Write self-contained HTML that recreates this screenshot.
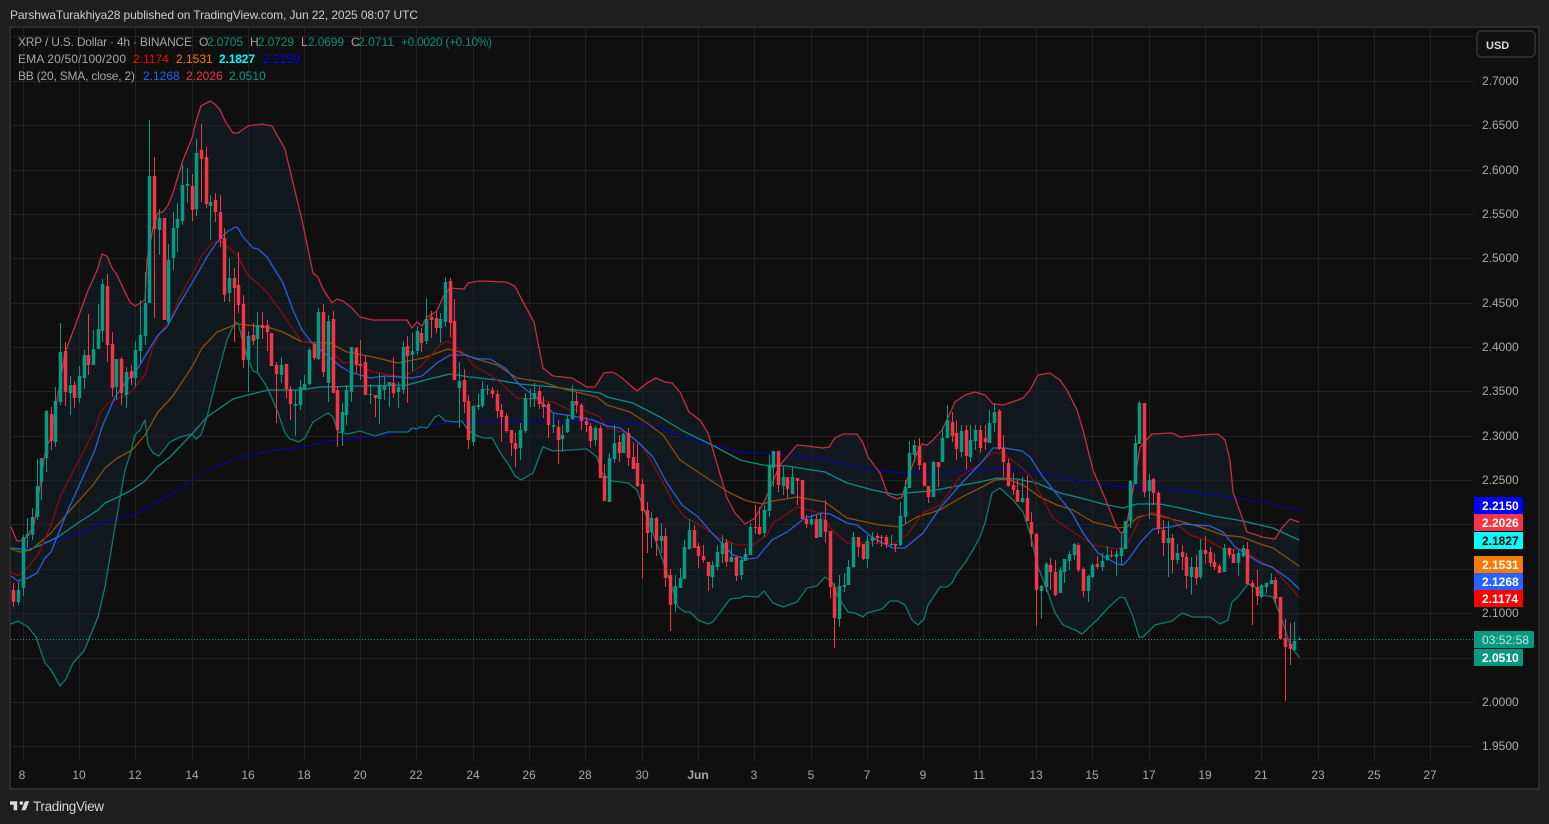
<!DOCTYPE html>
<html lang="en"><head><meta charset="utf-8"><title>XRP / U.S. Dollar chart</title>
<style>
html,body{margin:0;padding:0;background:#1e1e1e;width:1549px;height:824px;overflow:hidden}
svg{display:block}
text{font-family:"Liberation Sans",sans-serif;font-size:12px}
.g{fill:#a6a6a6}.t{fill:#0b8f78}.a{fill:#ababab;text-anchor:start}.x{fill:#a8a8a8;text-anchor:middle}
.l{fill:#fff;font-weight:bold;text-anchor:start}
polyline{fill:none;stroke-linejoin:round;stroke-linecap:round}
</style></head><body>
<svg xmlns="http://www.w3.org/2000/svg" width="1549" height="824" viewBox="0 0 1549 824">
<rect width="1549" height="824" fill="#1e1e1e"/>
<text x="10" y="19" fill="#cdcdcd" textLength="408" lengthAdjust="spacing">ParshwaTurakhiya28 published on TradingView.com, Jun 22, 2025 08:07 UTC</text>
<rect x="10" y="27" width="1529" height="762" fill="#0f0f0f" stroke="#2b2b2b" stroke-width="2"/>
<!-- band -->
<path fill="#12191e" d="M11 527L17 541 23 540 28 535 34 525 46 447 50 440 57 400 65 353 78 318 87 293 98 268 102 254 107 256 112 268 117 275 125 292 130 302 135 306 145 300 147 260 153 228 158 213 163 212 168 205 173 193 183 160 192 138 197 118 201 106 210 101 215 104 220 110 225 121 233 133 238 133 248 126 262 124 272 126 285 149 293 183 302 220 313 273 318 277 323 289 332 303 337 299 343 301 352 308 360 317 373 320 407 320 412 328 417 322 422 326 427 317 437 311 443 297 450 288 464 289 468 283 480 281 506 282 515 286 523 302 534 322 543 368 553 376 572 378 587 387 595 387 604 373 613 372 622 378 637 391 647 383 656 378 665 382 672 383 680 392 689 412 700 420 708 433 718 467 727 498 735 513 745 524 755 518 765 500 780 465 797 445 807 446 823 448 829 447 835 438 843 434 857 434 863 443 868 457 880 473 888 495 897 499 902 497 907 480 917 453 922 444 927 445 933 440 942 430 947 420 955 402 965 395 975 392 985 395 993 404 1003 405 1018 400 1023 398 1030 390 1038 375 1050 373 1060 380 1067 390 1077 410 1083 430 1093 470 1105 498 1117 528 1122 534 1127 523 1133 490 1140 447 1152 434 1172 433 1180 437 1200 435 1218 434 1225 440 1230 460 1233 492 1243 520 1247 532 1257 535 1262 537 1275 539 1282 528 1290 519 1299 522V762H11Z"/>
<path fill="#0f0f0f" d="M11 624L18 621 28 627 36 637 45 663 51 670 60 686 66 679 73 663 84 651 98 617 105 587 115 527 125 470 130 455 135 435 140 430 145 420 148 445 153 453 159 456 170 442 180 437 192 434 196 439 201 435 207 417 217 377 227 340 235 322 238 323 247 357 253 371 258 373 267 387 277 410 285 433 290 439 299 442 305 438 313 422 328 413 333 417 338 432 348 434 360 431 375 436 388 432 408 432 412 428 417 429 420 427 427 428 435 417 439 415 445 421 457 422 462 421 468 430 475 435 483 438 492 438 500 452 510 467 515 476 521 480 533 473 543 447 553 451 587 449 597 457 602 473 612 481 628 483 637 490 643 507 648 520 653 533 665 567 673 590 678 607 685 612 690 612 698 620 708 624 713 622 730 599 740 598 745 596 758 597 764 591 773 603 783 607 797 602 807 588 817 586 825 577 832 582 838 597 848 612 855 613 863 617 867 613 882 609 890 601 898 601 905 605 912 620 918 625 924 619 928 605 940 587 947 587 952 583 957 573 965 563 973 550 980 537 985 523 992 493 1000 488 1013 500 1023 512 1030 533 1038 567 1047 590 1055 613 1063 625 1075 630 1082 634 1097 620 1108 608 1120 597 1125 598 1133 617 1139 637 1143 637 1155 625 1172 621 1182 613 1193 617 1210 617 1220 624 1228 620 1232 602 1238 597 1248 584 1255 587 1262 595 1273 597 1282 620 1290 645 1299 657V762H11Z"/>
<!-- grid -->
<path stroke="#222" stroke-width="1" fill="none" shape-rendering="crispEdges" d="M11 36.5H1473M11 81.5H1473M11 125.5H1473M11 170.5H1473M11 214.5H1473M11 258.5H1473M11 303.5H1473M11 347.5H1473M11 391.5H1473M11 436.5H1473M11 480.5H1473M11 524.5H1473M11 569.5H1473M11 613.5H1473M11 658.5H1473M11 702.5H1473M11 746.5H1473M23.5 28V761M79.5 28V761M135.5 28V761M192.5 28V761M248.5 28V761M304.5 28V761M360.5 28V761M416.5 28V761M473.5 28V761M529.5 28V761M585.5 28V761M642.5 28V761M698.5 28V761M754.5 28V761M811.5 28V761M867.5 28V761M923.5 28V761M979.5 28V761M1036.5 28V761M1092.5 28V761M1149.5 28V761M1205.5 28V761M1261.5 28V761M1318.5 28V761M1374.5 28V761M1430.5 28V761"/>
<!-- ema 200 -->
<polyline stroke="#05059c" stroke-width="1.3" points="11,548 28,548 41,545 58,540 81,533 101,524 138,513 145,509 170,495 193,480 213,468 237,458 270,451 303,447 330,441 360,438 377,436 413,430 440,424 463,422 493,421 547,420 600,422 640,424 660,428 677,435 712,445 743,452 777,454 827,460 873,470 903,473 940,473 980,470 1000,468 1023,470 1050,475 1083,482 1123,487 1160,488 1213,495 1267,503 1299,511"/>
<!-- ema 100 -->
<polyline stroke="#0c8c88" stroke-width="1.3" points="11,548 28,550 41,545 58,537 78,523 98,510 105,503 118,497 130,491 145,481 157,467 170,457 192,434 207,417 233,399 248,395 268,390 300,390 320,387 363,386 407,385 433,378 450,374 470,377 497,380 520,384 553,387 600,393 607,397 633,403 660,417 683,431 712,445 740,460 763,465 787,466 825,472 847,483 873,490 897,495 907,493 930,491 957,486 980,482 997,478 1017,479 1037,483 1060,493 1077,497 1103,504 1123,508 1137,504 1160,504 1180,508 1213,516 1243,521 1273,528 1299,540"/>
<!-- ema 50 -->
<polyline stroke="#8a5010" stroke-width="1.3" points="11,549 20,552 31,550 51,533 66,515 93,485 105,468 116,459 132,450 145,435 158,412 172,397 192,367 202,348 217,332 237,324 267,327 283,332 302,342 330,343 343,350 347,352 373,357 398,363 423,358 448,349 460,352 473,358 497,365 517,378 543,382 560,388 597,397 607,405 630,412 647,423 663,435 680,460 707,478 730,493 747,501 763,504 773,501 797,497 825,502 847,518 880,525 900,527 917,517 940,510 960,498 980,488 995,480 1007,479 1023,485 1040,497 1057,505 1073,510 1093,522 1118,528 1127,527 1138,517 1152,514 1183,522 1200,527 1223,535 1242,537 1260,544 1273,548 1299,566"/>
<!-- ema 20 -->
<polyline stroke="#860c10" stroke-width="1.3" points="11,572 18,576 28,567 38,555 51,525 60,497 78,462 96,427 100,413 107,404 130,393 145,375 153,347 160,333 170,320 180,297 193,273 202,255 213,242 222,242 237,255 248,275 267,292 282,313 302,342 317,343 333,353 343,363 353,362 373,372 403,377 420,367 440,345 448,341 463,352 473,365 490,375 503,385 517,398 540,400 553,402 570,410 583,410 600,417 607,428 627,433 643,447 660,477 673,502 685,517 703,527 717,537 737,545 753,545 767,535 773,523 797,507 820,513 832,530 847,543 867,543 893,544 907,535 923,513 940,505 960,477 980,464 992,453 1002,453 1017,464 1030,475 1053,518 1073,532 1093,545 1118,549 1128,543 1140,518 1153,512 1170,518 1190,535 1207,540 1223,549 1243,550 1263,563 1273,568 1299,597"/>
<!-- bb basis -->
<polyline stroke="#2b5fdc" stroke-width="1.3" points="11,576 18,581 28,578 37,573 45,558 51,552 68,510 83,477 95,450 102,427 115,397 125,383 138,368 150,348 158,335 167,327 180,303 195,278 207,257 217,242 227,232 235,227 238,228 243,237 253,248 258,249 267,257 283,283 293,310 302,330 312,343 333,360 340,366 350,372 370,378 385,376 412,378 422,376 437,363 450,355 465,355 478,359 490,359 505,368 520,385 537,398 553,413 573,416 593,420 607,426 620,428 633,438 640,444 653,457 667,483 682,505 698,517 712,533 733,555 747,559 757,558 772,540 787,532 805,518 822,513 830,514 847,523 857,525 873,538 893,548 905,548 923,533 940,508 960,485 980,464 993,448 1005,448 1022,451 1030,457 1043,477 1072,513 1083,533 1098,553 1117,564 1123,565 1128,560 1140,543 1153,529 1170,527 1183,524 1210,526 1223,532 1235,547 1260,563 1272,567 1290,580 1299,589"/>
<!-- bb upper -->
<polyline stroke="#c42f40" stroke-width="1.3" points="11,527 17,541 23,540 28,535 34,525 46,447 50,440 57,400 65,353 78,318 87,293 98,268 102,254 107,256 112,268 117,275 125,292 130,302 135,306 145,300 147,260 153,228 158,213 163,212 168,205 173,193 183,160 192,138 197,118 201,106 210,101 215,104 220,110 225,121 233,133 238,133 248,126 262,124 272,126 285,149 293,183 302,220 313,273 318,277 323,289 332,303 337,299 343,301 352,308 360,317 373,320 407,320 412,328 417,322 422,326 427,317 437,311 443,297 450,288 464,289 468,283 480,281 506,282 515,286 523,302 534,322 543,368 553,376 572,378 587,387 595,387 604,373 613,372 622,378 637,391 647,383 656,378 665,382 672,383 680,392 689,412 700,420 708,433 718,467 727,498 735,513 745,524 755,518 765,500 780,465 797,445 807,446 823,448 829,447 835,438 843,434 857,434 863,443 868,457 880,473 888,495 897,499 902,497 907,480 917,453 922,444 927,445 933,440 942,430 947,420 955,402 965,395 975,392 985,395 993,404 1003,405 1018,400 1023,398 1030,390 1038,375 1050,373 1060,380 1067,390 1077,410 1083,430 1093,470 1105,498 1117,528 1122,534 1127,523 1133,490 1140,447 1152,434 1172,433 1180,437 1200,435 1218,434 1225,440 1230,460 1233,492 1243,520 1247,532 1257,535 1262,537 1275,539 1282,528 1290,519 1299,522"/>
<!-- bb lower -->
<polyline stroke="#0c7c6a" stroke-width="1.3" points="11,624 18,621 28,627 36,637 45,663 51,670 60,686 66,679 73,663 84,651 98,617 105,587 115,527 125,470 130,455 135,435 140,430 145,420 148,445 153,453 159,456 170,442 180,437 192,434 196,439 201,435 207,417 217,377 227,340 235,322 238,323 247,357 253,371 258,373 267,387 277,410 285,433 290,439 299,442 305,438 313,422 328,413 333,417 338,432 348,434 360,431 375,436 388,432 408,432 412,428 417,429 420,427 427,428 435,417 439,415 445,421 457,422 462,421 468,430 475,435 483,438 492,438 500,452 510,467 515,476 521,480 533,473 543,447 553,451 587,449 597,457 602,473 612,481 628,483 637,490 643,507 648,520 653,533 665,567 673,590 678,607 685,612 690,612 698,620 708,624 713,622 730,599 740,598 745,596 758,597 764,591 773,603 783,607 797,602 807,588 817,586 825,577 832,582 838,597 848,612 855,613 863,617 867,613 882,609 890,601 898,601 905,605 912,620 918,625 924,619 928,605 940,587 947,587 952,583 957,573 965,563 973,550 980,537 985,523 992,493 1000,488 1013,500 1023,512 1030,533 1038,567 1047,590 1055,613 1063,625 1075,630 1082,634 1097,620 1108,608 1120,597 1125,598 1133,617 1139,637 1143,637 1155,625 1172,621 1182,613 1193,617 1210,617 1220,624 1228,620 1232,602 1238,597 1248,584 1255,587 1262,595 1273,597 1282,620 1290,645 1299,657"/>
<!-- last price line -->
<path d="M11 639.5H1473" stroke="#089981" stroke-width="1" stroke-dasharray="1 2" fill="none"/>
<!-- green wicks -->
<path stroke="#089981" stroke-width="1" fill="none" shape-rendering="crispEdges" d="M18.5 582V605M23.5 535V596M27.5 518V548M32.5 508V540M37.5 459V520M41.5 458V500M46.5 410V472M55.5 387V447M60.5 323V405M70.5 376V415M79.5 366V403M84.5 350V389M93.5 330V365M98.5 304V349M102.5 279V342M116.5 359V400M126.5 367V408M135.5 341V387M140.5 300V363M145.5 272V345M149.5 120V303M159.5 209V255M168.5 244V325M173.5 212V270M177.5 203V252M182.5 165V225M187.5 168V203M196.5 139V216M210.5 195V240M229.5 258V302M248.5 331V392M257.5 312V372M281.5 357V383M295.5 390V436M300.5 380V410M304.5 375V390M309.5 348V385M318.5 308V360M328.5 315V402M342.5 403V446M346.5 385V425M351.5 347V402M370.5 384V404M379.5 373V424M384.5 377V400M389.5 382V407M398.5 382V408M403.5 341V394M412.5 333V371M417.5 326V355M426.5 298V344M440.5 313V343M445.5 277V327M459.5 362V428M473.5 405V446M478.5 394V410M482.5 381V408M487.5 385V395M520.5 423V460M525.5 393V433M530.5 389V407M534.5 383V407M553.5 414V433M562.5 425V452M567.5 415V433M572.5 385V420M595.5 426V446M609.5 453V502M614.5 425V463M623.5 433V453M651.5 512V548M661.5 523V553M675.5 575V612M680.5 568V588M684.5 540V579M689.5 519V550M712.5 561V588M717.5 545V570M722.5 535V563M731.5 543V562M741.5 558V580M745.5 548V561M750.5 523V555M764.5 505V537M769.5 455V517M773.5 451V487M783.5 467V495M792.5 467V494M811.5 515V526M820.5 513V537M839.5 575V627M844.5 573V592M848.5 560V585M853.5 532V568M867.5 535V568M872.5 532V547M891.5 535V546M900.5 502V546M905.5 480V524M909.5 441V488M914.5 440V462M933.5 461V497M942.5 427V462M947.5 405V438M961.5 425V457M970.5 425V462M975.5 425V450M989.5 410V443M994.5 403V432M1022.5 477V503M1041.5 585V619M1046.5 562V592M1060.5 567V593M1064.5 559V583M1069.5 551V570M1074.5 543V560M1088.5 575V602M1092.5 563V578M1102.5 553V571M1107.5 546V561M1116.5 550V576M1121.5 535V565M1125.5 521V549M1130.5 480V528M1135.5 435V484M1139.5 401V444M1149.5 474V519M1168.5 521V577M1177.5 544V564M1191.5 557V595M1200.5 539V579M1224.5 544V572M1238.5 551V576M1243.5 545V557M1261.5 584V598M1266.5 582V594M1271.5 573V584M1294.5 622V650M1299.5 637V640"/>
<!-- green bodies -->
<path stroke="#089981" stroke-width="3.5" fill="none" d="M18.5 590V602M23.5 537V588M27.5 534V536M32.5 517V535M37.5 486V517M41.5 458V482M46.5 411V458M55.5 401V442M60.5 352V402M70.5 385V393M79.5 376V398M84.5 355V378M93.5 349V365M98.5 329V349M102.5 284V331M116.5 359V387M126.5 372V395M135.5 350V378M140.5 335V351M145.5 303V336M149.5 176V303M159.5 218V230M168.5 260V322M173.5 228V258M177.5 219V228M182.5 185V221M187.5 184V186M196.5 153V209M210.5 202V206M229.5 278V293M248.5 336V360M257.5 325V339M281.5 365V375M295.5 404V406M300.5 387V405M304.5 384V390M309.5 350V384M318.5 312V359M328.5 321V383M342.5 412V432M346.5 390V415M351.5 347V392M370.5 394V395M379.5 385V399M384.5 386V390M389.5 382V386M398.5 387V392M403.5 347V390M412.5 351V355M417.5 331V351M426.5 319V341M440.5 319V328M445.5 282V322M459.5 381V388M473.5 406V442M478.5 405V407M482.5 389V406M487.5 389V390M520.5 430V448M525.5 398V431M530.5 398V399M534.5 393V399M553.5 425V427M562.5 435V439M567.5 419V432M572.5 401V419M595.5 428V440M609.5 458V502M614.5 443V459M623.5 434V453M651.5 518V532M661.5 536V541M675.5 586V604M680.5 578V588M684.5 547V579M689.5 530V549M712.5 565V577M717.5 552V567M722.5 543V554M731.5 557V562M741.5 560V575M745.5 554V561M750.5 527V555M764.5 510V533M769.5 465V511M773.5 451V468M783.5 477V486M792.5 477V494M811.5 519V524M820.5 519V537M839.5 586V619M844.5 585V587M848.5 567V585M853.5 537V567M867.5 541V559M872.5 537V541M891.5 544V545M900.5 516V545M905.5 487V517M909.5 453V488M914.5 445V455M933.5 462V497M942.5 438V462M947.5 420V438M961.5 431V452M970.5 440V457M975.5 430V441M989.5 423V443M994.5 412V423M1022.5 498V502M1041.5 586V591M1046.5 564V587M1060.5 570V593M1064.5 559V572M1069.5 554V561M1074.5 544V555M1088.5 576V591M1092.5 565V577M1102.5 561V567M1107.5 555V560M1116.5 554V557M1121.5 548V556M1125.5 521V549M1130.5 481V521M1135.5 443V484M1139.5 403V444M1149.5 480V491M1168.5 538V543M1177.5 553V560M1191.5 567V577M1200.5 550V577M1224.5 548V572M1238.5 553V563M1243.5 548V556M1261.5 585V597M1266.5 583V587M1271.5 580V584M1294.5 641V650M1299.5 639V640"/>
<!-- red wicks -->
<path stroke="#f23645" stroke-width="1" fill="none" shape-rendering="crispEdges" d="M13.5 583V607M51.5 407V450M65.5 342V406M74.5 381V408M88.5 314V375M107.5 274V362M112.5 332V397M121.5 357V405M131.5 365V385M154.5 157V318M164.5 218V320M192.5 174V221M201.5 124V202M206.5 147V208M215.5 193V222M220.5 195V247M224.5 228V302M234.5 268V342M238.5 252V313M243.5 295V368M253.5 323V345M262.5 312V339M267.5 320V351M271.5 333V366M276.5 362V423M286.5 364V398M290.5 386V420M314.5 342V360M323.5 304V377M333.5 311V393M337.5 387V447M356.5 347V373M360.5 340V380M365.5 355V395M375.5 395V417M393.5 357V398M407.5 336V403M421.5 328V352M431.5 311V338M436.5 311V333M450.5 278V337M454.5 299V380M464.5 369V413M468.5 395V449M492.5 387V398M497.5 390V418M501.5 404V442M506.5 413V433M511.5 430V456M515.5 433V467M539.5 387V409M543.5 396V418M548.5 402V438M558.5 420V464M576.5 392V413M581.5 403V430M586.5 417V432M590.5 423V448M600.5 425V478M604.5 464V501M619.5 435V462M628.5 428V466M633.5 442V469M637.5 444V487M642.5 479V578M647.5 502V553M656.5 517V556M665.5 528V587M670.5 569V631M694.5 525V548M698.5 543V568M703.5 545V563M708.5 562V591M726.5 539V567M736.5 557V581M755.5 505V534M759.5 507V535M778.5 451V492M787.5 477V498M797.5 478V505M802.5 480V519M806.5 515V528M816.5 515V538M825.5 500V543M830.5 531V598M834.5 583V648M858.5 537V557M863.5 544V560M877.5 533V543M881.5 535V547M886.5 535V548M895.5 544V552M919.5 438V470M924.5 462V486M928.5 486V503M938.5 462V487M952.5 412V442M956.5 420V460M966.5 425V470M980.5 425V453M985.5 425V450M999.5 409V450M1003.5 435V477M1008.5 459V487M1013.5 473V495M1017.5 480V502M1027.5 475V521M1031.5 512V547M1036.5 533V626M1050.5 558V590M1055.5 560V596M1078.5 543V572M1083.5 567V597M1097.5 556V569M1111.5 550V558M1144.5 403V497M1153.5 478V505M1158.5 491V534M1163.5 520V556M1172.5 534V573M1182.5 545V570M1186.5 553V589M1196.5 555V585M1205.5 536V564M1210.5 547V567M1214.5 553V570M1219.5 564V573M1229.5 547V558M1233.5 549V563M1247.5 542V584M1252.5 580V625M1257.5 570V605M1275.5 577V604M1280.5 597V639M1285.5 619V701M1290.5 623V665"/>
<!-- red bodies -->
<path stroke="#f23645" stroke-width="3.5" fill="none" d="M13.5 590V602M51.5 414V441M65.5 351V392M74.5 385V398M88.5 355V365M107.5 286V345M112.5 344V388M121.5 359V393M131.5 371V378M154.5 176V229M164.5 218V320M192.5 186V210M201.5 150V159M206.5 157V204M215.5 200V212M220.5 212V239M224.5 238V295M234.5 278V288M238.5 285V305M243.5 304V360M253.5 335V341M262.5 325V328M267.5 325V332M271.5 333V366M276.5 365V374M286.5 364V389M290.5 389V404M314.5 344V358M323.5 312V372M333.5 319V393M337.5 390V430M356.5 348V365M360.5 364V366M365.5 362V395M375.5 395V398M393.5 383V393M407.5 346V356M421.5 333V343M431.5 317V320M436.5 318V328M450.5 281V323M454.5 321V380M464.5 380V402M468.5 401V440M492.5 390V394M497.5 394V411M501.5 410V417M506.5 416V431M511.5 430V443M515.5 443V449M539.5 391V404M543.5 404V407M548.5 404V425M558.5 427V440M576.5 401V405M581.5 405V421M586.5 421V425M590.5 426V441M600.5 428V478M604.5 476V501M619.5 442V453M628.5 433V458M633.5 457V469M637.5 463V486M642.5 484V511M647.5 510V533M656.5 518V541M665.5 536V578M670.5 575V605M694.5 530V548M698.5 546V556M703.5 556V560M708.5 562V576M726.5 542V562M736.5 557V576M755.5 527V528M759.5 527V534M778.5 451V485M787.5 477V489M797.5 478V481M802.5 480V519M806.5 519V524M816.5 519V538M825.5 520V532M830.5 531V587M834.5 587V618M858.5 537V547M863.5 544V559M877.5 536V538M881.5 537V538M886.5 537V544M895.5 544V546M919.5 446V465M924.5 463V486M928.5 486V497M938.5 462V467M952.5 422V436M956.5 433V449M966.5 430V456M980.5 430V448M985.5 438V442M999.5 411V449M1003.5 448V462M1008.5 463V486M1013.5 485V490M1017.5 490V502M1027.5 498V521M1031.5 522V534M1036.5 534V590M1050.5 565V572M1055.5 572V595M1078.5 545V570M1083.5 569V591M1097.5 564V567M1111.5 555V556M1144.5 403V492M1153.5 479V493M1158.5 493V529M1163.5 530V543M1172.5 538V560M1182.5 552V557M1186.5 557V576M1196.5 567V578M1205.5 550V554M1210.5 552V563M1214.5 562V567M1219.5 566V573M1229.5 548V555M1233.5 554V563M1247.5 549V584M1252.5 583V587M1257.5 587V596M1275.5 580V599M1280.5 597V639M1285.5 638V647M1290.5 644V649"/>
<!-- legend -->
<text class="g" x="18" y="46" textLength="174" lengthAdjust="spacing">XRP / U.S. Dollar · 4h · BINANCE</text>
<text class="g" x="199" y="46">O</text><text class="t" x="207" y="46" textLength="36">2.0705</text>
<text class="g" x="250" y="46">H</text><text class="t" x="258" y="46" textLength="36">2.0729</text>
<text class="g" x="301" y="46">L</text><text class="t" x="308" y="46" textLength="36">2.0699</text>
<text class="g" x="351" y="46">C</text><text class="t" x="358" y="46" textLength="36">2.0711</text>
<text class="t" x="401" y="46" textLength="91" lengthAdjust="spacing">+0.0020 (+0.10%)</text>
<text class="g" x="18" y="63" textLength="108" lengthAdjust="spacing">EMA 20/50/100/200</text>
<text x="133" y="63" fill="#f00">2.1174</text><text x="176" y="63" fill="#f57c00">2.1531</text><text x="219" y="63" fill="#0ff" font-weight="bold" textLength="36">2.1827</text><text x="263" y="63" fill="#0000ff">2.2150</text>
<text class="g" x="18" y="80" textLength="117" lengthAdjust="spacing">BB (20, SMA, close, 2)</text>
<text x="143" y="80" fill="#2962ff">2.1268</text><text x="186" y="80" fill="#f23645">2.2026</text><text x="229" y="80" fill="#089981">2.0510</text>
<!-- usd -->
<rect x="1477" y="31" width="58" height="26" rx="4.5" fill="#0f0f0f" stroke="#353535" stroke-width="1.5"/>
<text x="1486" y="49" fill="#dcdcdc" font-weight="bold" style="font-size:11px">USD</text>
<!-- price axis -->
<g class="a">
<text class="a" x="1482" y="85">2.7000</text><text class="a" x="1482" y="129">2.6500</text><text class="a" x="1482" y="174">2.6000</text><text class="a" x="1482" y="218">2.5500</text><text class="a" x="1482" y="262">2.5000</text><text class="a" x="1482" y="307">2.4500</text><text class="a" x="1482" y="351">2.4000</text><text class="a" x="1482" y="395">2.3500</text><text class="a" x="1482" y="440">2.3000</text><text class="a" x="1482" y="484">2.2500</text><text class="a" x="1482" y="617">2.1000</text><text class="a" x="1482" y="706">2.0000</text><text class="a" x="1482" y="750">1.9500</text>
</g>
<!-- price tags -->
<path fill="#0000ff" d="M1474 497H1522a1 1 0 0 1 1 1V513a1 1 0 0 1-1 1H1474Z"/><text class="l" x="1482" y="510">2.2150</text>
<path fill="#f23645" d="M1474 514H1522a1 1 0 0 1 1 1V530a1 1 0 0 1-1 1H1474Z"/><text class="l" x="1482" y="527">2.2026</text>
<path fill="#00ffff" d="M1474 532H1522a1 1 0 0 1 1 1V548a1 1 0 0 1-1 1H1474Z"/><text x="1482" y="545" fill="#000" font-weight="bold">2.1827</text>
<path fill="#f57c00" d="M1474 556H1522a1 1 0 0 1 1 1V572a1 1 0 0 1-1 1H1474Z"/><text class="l" x="1482" y="569">2.1531</text>
<path fill="#2962ff" d="M1474 573H1522a1 1 0 0 1 1 1V589a1 1 0 0 1-1 1H1474Z"/><text class="l" x="1482" y="586">2.1268</text>
<path fill="#ff0000" d="M1474 590H1522a1 1 0 0 1 1 1V606a1 1 0 0 1-1 1H1474Z"/><text class="l" x="1482" y="603">2.1174</text>
<path fill="#089981" d="M1474 631H1532a2 2 0 0 1 2 2V646a2 2 0 0 1-2 2H1474Z"/><text x="1482" y="644" fill="#bfe6dd" textLength="47">03:52:58</text>
<path fill="#089981" d="M1474 649H1522a1 1 0 0 1 1 1V665a1 1 0 0 1-1 1H1474Z"/><text class="l" x="1482" y="662">2.0510</text>
<!-- time axis -->
<g>
<text class="x" x="22" y="779">8</text><text class="x" x="79" y="779">10</text><text class="x" x="135" y="779">12</text><text class="x" x="192" y="779">14</text><text class="x" x="248" y="779">16</text><text class="x" x="304" y="779">18</text><text class="x" x="360" y="779">20</text><text class="x" x="416" y="779">22</text><text class="x" x="473" y="779">24</text><text class="x" x="529" y="779">26</text><text class="x" x="585" y="779">28</text><text class="x" x="642" y="779">30</text><text class="x" x="698" y="779" font-weight="bold">Jun</text><text class="x" x="754" y="779">3</text><text class="x" x="811" y="779">5</text><text class="x" x="867" y="779">7</text><text class="x" x="923" y="779">9</text><text class="x" x="979" y="779">11</text><text class="x" x="1036" y="779">13</text><text class="x" x="1092" y="779">15</text><text class="x" x="1149" y="779">17</text><text class="x" x="1205" y="779">19</text><text class="x" x="1261" y="779">21</text><text class="x" x="1318" y="779">23</text><text class="x" x="1374" y="779">25</text><text class="x" x="1430" y="779">27</text>
</g>
<!-- footer logo -->
<path transform="translate(8.8 797.6) scale(.6)" fill="#dcdcdc" d="M14 6H2v6h6v9h6V6Zm14 15h-7l6-15h7l-6 15Zm-7-9a3 3 0 1 0 0-6 3 3 0 0 0 0 6Z"/>
<text x="33" y="811" fill="#d6d6d6" style="font-size:13.5px" textLength="71" lengthAdjust="spacing">TradingView</text>
</svg>
</body></html>
